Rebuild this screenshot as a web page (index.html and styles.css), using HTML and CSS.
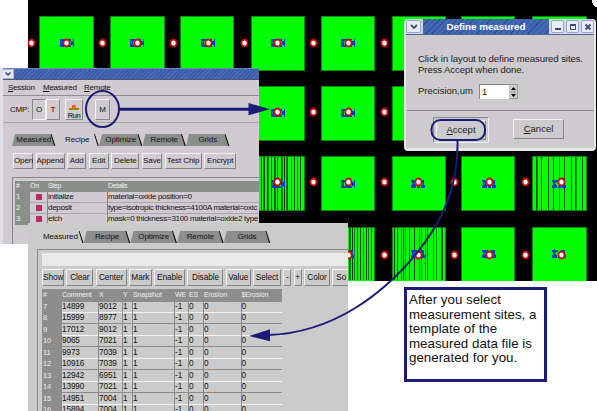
FILE: index.html
```
<!DOCTYPE html>
<html lang="en">
<head>
<meta charset="utf-8">
<title>Define measured</title>
<link rel="stylesheet" href="styles.css">
</head>
<body>
<main class="desktop">
<svg class="layout" width="569" height="281" viewBox="28 0 569 281" shape-rendering="crispEdges">
  <defs>
    <g id="dot" shape-rendering="auto"><ellipse rx="3.1" ry="3.5" fill="#fff" stroke="#c90808" stroke-width="1.8"/></g>
    <g id="mark"><path fill="#003cc8" d="M-7-4h3v8h-3zM-4-4h8v2h-8zM-4 2h8v2h-8zM4-2h2v4h-2zM6-4h1v8h-1z"/><path fill="#168080" d="M-6-2h1v3h-1zM-3-3h2v5h-2zM3 1h1v2h-1z"/></g>
    <g id="mark2"><path fill="#003cc8" d="M-7-3h6v2h-6zM-6-1h3v3h-3zM-7 2h5v3h-5zM-1 3h3v2h-3zM2-3h4v3h-4zM4 0h2v2h-2zM3 2h4v3h-4z"/><path fill="#168080" d="M-5 0h2v1h-2zM4 0h1v2h-1z"/></g>
    <g id="cells1"><path d="M39.500 16h54v54h-54zM110 16h54v54h-54zM180.500 16h53v54h-53zM251 16h53v54h-53zM321.500 16h53v54h-53zM392 16h53v54h-53zM461.500 16h53v54h-53zM532 16h54v54h-54z"/></g>
  </defs>
  <path d="M28 0h569v281H28z"/>
  <g fill="#0f0" stroke="#008a00" stroke-width="1">
    <use href="#cells1"/><use href="#cells1" y="70"/><use href="#cells1" y="140.500"/><use href="#cells1" y="211"/>
  </g>
  <path stroke="#063c06" stroke-width="1" d="M261.500 157v53m3-53v53m3-53v53m4-53v53m3-53v53m3-53v53m4-53v53m3-53v53m3-53v53m4-53v53m3-53v53m3-53v53m3-53v53"/>
  <path stroke="#008c00" stroke-width="1" d="M263.500 157v53m5-53v53m7-53v53m7-53v53m4-53v53m5-53v53m6-53v53"/>
  <path stroke="#063c06" stroke-width="1" d="M349.500 227v53m3-53v53m5-53v53m3-53v53m6-53v53m5-53v53M394.500 227v53m3-53v53m6-53v53m6-53v53m5-53v53m13-53v53m9-53v53m6-53v53"/>
  <path stroke="#008c00" stroke-width="1" d="M350.500 227v53m4-53v53m9-53v53m5-53v53M401.500 227v53m4-53v53m14-53v53m2-53v53m4-53v53m8-53v53m3-53v53m5-53v53"/>
  <path stroke="#064806" stroke-width="1" d="M536.500 157v53m5-53v53m7-53v53m5-53v53m6-53v53m5-53v53m7-53v53m4-53v53m7-53v53"/>
  <path stroke="#009c00" stroke-width="1" d="M537.500 157v53m22-53v53m17-53v53"/>
  <g>
    <use href="#mark" x="67" y="43"/><use href="#mark" x="137" y="43"/><use href="#mark" x="208" y="43"/><use href="#mark" x="278" y="43"/><use href="#mark" x="348" y="43"/>
    <use href="#mark" x="278" y="113"/><use href="#mark" x="348" y="113"/>
    <use href="#mark" x="278" y="184"/><use href="#mark" x="348" y="184"/>
    <use href="#mark2" x="418" y="183"/><use href="#mark2" x="489" y="183"/><use href="#mark2" x="559" y="183"/>
    <use href="#mark2" x="347" y="253"/><use href="#mark2" x="418" y="253"/><use href="#mark2" x="489" y="253"/><use href="#mark2" x="559" y="253"/>
  </g>
  <g id="dots">
    <use href="#dot" x="31.500" y="43"/><use href="#dot" x="66.500" y="43"/><use href="#dot" x="102.500" y="43"/><use href="#dot" x="137.500" y="43"/><use href="#dot" x="173.500" y="43"/><use href="#dot" x="208.500" y="43"/><use href="#dot" x="244.500" y="43"/><use href="#dot" x="277.500" y="43"/><use href="#dot" x="313.500" y="43"/><use href="#dot" x="348.500" y="43"/><use href="#dot" x="384.500" y="43"/>
    <use href="#dot" x="277.500" y="112"/><use href="#dot" x="313.500" y="112"/><use href="#dot" x="348.500" y="112"/><use href="#dot" x="384.500" y="112"/>
    <use href="#dot" x="277.500" y="182"/><use href="#dot" x="313.500" y="182"/><use href="#dot" x="348.500" y="182"/><use href="#dot" x="384.500" y="182"/><use href="#dot" x="418.500" y="182"/><use href="#dot" x="454.500" y="182"/><use href="#dot" x="489.500" y="182"/><use href="#dot" x="525.500" y="182"/><use href="#dot" x="561.500" y="182"/>
    <use href="#dot" x="348.500" y="255"/><use href="#dot" x="384.500" y="255"/><use href="#dot" x="418.500" y="255"/><use href="#dot" x="454.500" y="255"/><use href="#dot" x="489.500" y="255"/><use href="#dot" x="525.500" y="255"/><use href="#dot" x="561.500" y="255"/>
  </g>
  <path fill="#fff" d="M592 0h5v7h-2v-1h-1v-1h-1v-2h-1z"/>
</svg>

<section class="win recipe-win">
  <header class="bar"><span class="winbtn"><svg width="6" height="4"><path d="M.5.500l2.500 2.500L5.500.500" fill="none" stroke="#446" stroke-width="1.500"/></svg></span></header>
  <nav class="menu"><span class="m1"><u>S</u>ession</span><span class="m2"><u>M</u>easured</span><span><u>R</u>emote</span></nav>
  <div class="tools">
    <span class="cmp">CMP:</span><b class="tb on">O</b><b class="tb">T</b>
    <b class="tb run"><svg width="12" height="7"><path d="M4 0h4v3H4z" fill="#f0642c"/><path d="M1 3h10v2H1z" fill="#8c8c00"/><path d="M5 3h2v2H5z" fill="#d08000"/></svg><span>Run</span></b>
    <b class="tb mm">M</b>
  </div>
  <div class="tabs">
    <span class="tab">Measured</span><span class="tab active">Recipe</span><span class="tab">Optimize</span><span class="tab">Remote</span><span class="tab">Grids</span>
  </div>
  <div class="btns">
    <b class="w20">Open</b><b class="w29">Append</b><b class="w19">Add</b><b class="w20">Edit</b><b class="w28">Delete</b><b class="w20">Save</b><b class="w37">Test Chip</b><b class="w32">Encrypt</b>
  </div>
  <div class="steps">
    <div class="srow head"><span>#</span><span>On</span><span>Step</span><span>Details</span></div>
    <div class="srow"><span>1</span><span><i></i></span><span>initialize</span><span>material=oxide position=0</span></div>
    <div class="srow"><span>2</span><span><i></i></span><span>deposit</span><span>type=isotropic thickness=4100A material=oxic</span></div>
    <div class="srow"><span>3</span><span><i></i></span><span>etch</span><span>mask=0 thickness=3100 material=oxide2 type</span></div>
  </div>
</section>

<section class="win data-win">
  <div class="tabs">
    <span class="tab active">Measured</span><span class="tab">Recipe</span><span class="tab">Optimize</span><span class="tab">Remote</span><span class="tab">Grids</span>
  </div>
  <div class="panel">
    <div class="strip"></div>
    <div class="btns">
      <b class="w22">Show</b><b class="w27">Clear</b><b class="w31">Center</b><b class="w23">Mark</b><b class="w31">Enable</b><b class="w36">Disable</b><b class="w25">Value</b><b class="w28">Select</b><b class="w8">-</b><b class="w8">+</b><b class="w26">Color</b><b class="cut">So</b>
    </div>
    <div class="grid">
      <div class="drow head"><span>#</span><span>Comment</span><span>X</span><span>Y</span><span>Snapshot</span><span>WE</span><span>ES</span><span>Erosion</span><span>$Erosion</span></div>
      <div class="drow"><span>7</span><span>14899</span><span>9012</span><span>1</span><span>1</span><span>-1</span><span>0</span><span>0</span><span>0</span></div>
      <div class="drow"><span>8</span><span>15999</span><span>8977</span><span>1</span><span>1</span><span>-1</span><span>0</span><span>0</span><span>0</span></div>
      <div class="drow"><span>9</span><span>17012</span><span>9012</span><span>1</span><span>1</span><span>-1</span><span>0</span><span>0</span><span>0</span></div>
      <div class="drow"><span>10</span><span>9065</span><span>7021</span><span>1</span><span>1</span><span>-1</span><span>0</span><span>0</span><span>0</span></div>
      <div class="drow"><span>11</span><span>9973</span><span>7039</span><span>1</span><span>1</span><span>-1</span><span>0</span><span>0</span><span>0</span></div>
      <div class="drow"><span>12</span><span>10916</span><span>7039</span><span>1</span><span>1</span><span>-1</span><span>0</span><span>0</span><span>0</span></div>
      <div class="drow"><span>13</span><span>12942</span><span>6951</span><span>1</span><span>1</span><span>-1</span><span>0</span><span>0</span><span>0</span></div>
      <div class="drow"><span>14</span><span>13990</span><span>7021</span><span>1</span><span>1</span><span>-1</span><span>0</span><span>0</span><span>0</span></div>
      <div class="drow"><span>15</span><span>14951</span><span>7004</span><span>1</span><span>1</span><span>-1</span><span>0</span><span>0</span><span>0</span></div>
      <div class="drow"><span>16</span><span>15894</span><span>7004</span><span>1</span><span>1</span><span>-1</span><span>0</span><span>0</span><span>0</span></div>
    </div>
  </div>
</section>

<section class="win dialog">
  <header class="dbar">
    <span class="dbtn"><svg width="8" height="6"><path d="M1 1l3 3 3-3" fill="none" stroke="#3c4a78" stroke-width="1.800"/></svg></span>
    <h1>Define measured</h1>
    <span class="dbtn s"><svg width="8" height="8"><path d="M1 5h6v2H1z" fill="#3c4a78"/></svg></span>
    <span class="dbtn s"><svg width="8" height="8"><path d="M1.500 2v4.500h5V2" fill="none" stroke="#3c4a78"/><path d="M1 1h6v2H1z" fill="#3c4a78"/></svg></span>
    <span class="dbtn s"><svg width="8" height="8"><path d="M1.500 1.500l5 5m0-5l-5 5" stroke="#3c4a78" stroke-width="1.800"/></svg></span>
  </header>
  <p class="msg">Click in layout to define measured sites.<br>Press Accept when done.</p>
  <div class="prec"><label>Precision,um</label><span class="field">1</span><span class="spin"><svg width="7" height="12"><path d="M3.500 1L6 4H1zM3.500 11L6 8H1z"/><path d="M0 6h7" stroke="#999"/></svg></span></div>
  <footer class="foot"><span class="default"><b><u>A</u>ccept</b></span><b class="cancel"><u>C</u>ancel</b></footer>
</section>

<aside class="callout">After you select measurement sites, a template of the measured data file is generated for you.</aside>

<svg class="notes" width="597" height="411" viewBox="0 0 597 411">
  <g fill="none" stroke="#1c1c78" stroke-width="2">
    <ellipse cx="102.500" cy="109" rx="16.500" ry="18"/>
    <path d="M118 109.300H250" stroke-width="3"/>
    <rect x="431.500" y="120" width="53.500" height="20" rx="9"/>
    <path d="M457.500 140C458.500 185 444 219 417 253C384 293 334 333 268 335"/>
  </g>
  <path fill="#1c1c78" d="M248.500 103l21.500 6.300-21.500 6zM249 336l21-6.800v12z"/>
</svg>
</main>
</body>
</html>
```
FILE: styles.css
```
* { box-sizing: border-box; }
body { margin: 0; background: #fff; font-family: "Liberation Sans", Arial, sans-serif; font-size: 8px; color: #111; }
b { font-weight: normal; }
.desktop { position: relative; width: 597px; height: 411px; overflow: hidden; }
.layout, .win, .callout, .notes { position: absolute; }
.layout { left: 28px; top: 0; }
.notes { left: 0; top: 0; }
.win { overflow: hidden; white-space: nowrap; }

.recipe-win { left: 0; top: 68px; width: 259px; height: 176px; background: #d0cbd0; border-left: 3px solid #dfdfe8; }
.bar { height: 12px; background: repeating-linear-gradient(135deg, #4a6eb8 0 1px, #3c5ea8 1px 3px); border-bottom: 1px solid #556; border-top: 1px solid #7088c0; }
.winbtn { display: flex; width: 12px; height: 10px; margin-left: -1px; align-items: center; justify-content: center; background: #e4e8f4; border: 1px solid #aab4d0; }
.menu { display: flex; height: 16px; padding: 1px 0 0 5px; line-height: 13px; border-bottom: 1px solid #908c90; letter-spacing: -.25px; }
.m1 { width: 35px; }
.m2 { width: 41px; }
.tools { display: flex; height: 27px; padding: 3px 0 0 7px; border-bottom: 1px solid #a8a4a8; }
.cmp { width: 22px; line-height: 21px; letter-spacing: -.2px; }
.tb { width: 14px; height: 21px; line-height: 19px; text-align: center; border: 1px solid; border-color: #f4f4f4 #888 #888 #f4f4f4; }
.tb.on { border-color: #888 #f4f4f4 #f4f4f4 #888; }
.run { display: flex; flex-direction: column; align-items: center; width: 18px; margin-left: 5px; padding-top: 5px; line-height: 8px; font-size: 7.500px; letter-spacing: -.4px; color: #000; }
.run svg { flex: none; }
.mm { width: 15px; margin-left: 12px; }
.tabs { display: flex; }
.tab { position: relative; height: 12px; line-height: 12px; text-align: center; background: #8b8f8b; clip-path: polygon(3px 0, calc(100% - 4px) 0, 100% 100%, 0 100%); letter-spacing: -.1px; }
.tab::after { content: ""; position: absolute; right: 0; top: 0; width: 5px; height: 12px; background: #111; clip-path: polygon(0 0, 1.2px 0, 100% 100%, 3.600px 100%); }
.recipe-win .tabs { margin: 11px 0 0 9px; }
.recipe-win .tab { width: 43.500px; }
.recipe-win .tab.active { background: #d0cbd0; }
.btns { display: flex; }
.btns b { flex: none; line-height: 14px; text-align: center; border: 1px solid; border-color: #f4f4f4 #858585 #858585 #f4f4f4; letter-spacing: -.1px; }
.recipe-win .btns { height: 16px; gap: 2.600px; margin: 7px 0 0 10px; }
.w8 { width: 8px; } .w19 { width: 19px; } .w20 { width: 20px; } .w22 { width: 22px; } .w23 { width: 23px; } .w25 { width: 25px; } .w26 { width: 26px; } .w27 { width: 27px; } .w28 { width: 28px; } .w29 { width: 29px; } .w31 { width: 31px; } .w32 { width: 32px; } .w36 { width: 36px; } .w37 { width: 37px; }
.btns .cut { flex: 1; text-align: left; padding-left: 3px; border-right: 0; }
.steps { margin: 8px 0 0 9px; padding: 3px 0 0 2px; border: solid #898589; border-width: 1px 0 0 1px; height: 70px; }
.srow { display: grid; grid-template-columns: 14px 18px 60px 1fr; height: 11px; line-height: 10px; letter-spacing: -.3px; }
.srow span { border-left: 1px solid #858585; border-bottom: 1px solid #aaa6aa; }
.srow span:first-child, .srow.head span { background: #8b8f8b; color: #f0f0f0; border-color: #8b8f8b; }
.srow.head span { font-size: 7px; }
.srow i { display: block; width: 6px; height: 6px; margin: 2px 0 0 6px; background: #b62c60; }

.data-win { left: 28px; top: 223px; width: 320px; height: 188px; background: #cbcbcb; }
.data-win .tabs { padding: 8px 0 0 9px; }
.data-win .tab { width: 46.700px; background: #8d8d8d; }
.data-win .tab.active { background: #cbcbcb; }
.panel { margin: 6px 0 0 9px; padding: 3px 0 0 4px; border: solid #8a8a8a; border-width: 1px 0 0 1px; height: 170px; }
.strip { height: 13px; background: #e9e9e9; }
.data-win .btns { height: 17px; gap: 2.300px; margin-top: 3px; }
.data-win .btns b { line-height: 15px; font-size: 8.300px; }
.grid { width: 240px; margin-top: 3px; }
.drow { display: grid; grid-template-columns: 19px 37px 24px 10px 42px 14px 15px 37.500px 41.500px; height: 11.550px; line-height: 11px; font-size: 8.200px; letter-spacing: -.1px; }
.drow span { border-left: 1px solid #8a8a8a; border-bottom: 1px solid #8a8a8a; white-space: nowrap; }
.drow:nth-child(even) span { border-bottom-color: #f4f4f4; }
.drow span:first-child, .drow.head span { background: #8d8d8d; color: #f0f0f0; border-color: #8d8d8d; font-size: 7.500px; }
.drow.head span { font-size: 7px; line-height: 12px; }

.dialog { left: 404px; top: 19px; width: 192px; height: 132px; background: #cdcbcd; border: solid #e8e8e8; border-width: 0 2px 3px; border-radius: 4px; color: #222; }
.dbar { display: flex; align-items: center; height: 16px; gap: 2px; background: #cdd6ea; border-bottom: 1px solid #59678c; }
.dbtn { display: flex; flex: none; width: 15px; height: 13px; align-items: center; justify-content: center; background: #e8ecf6; border: 1px solid #98a6c8; border-radius: 2px; }
.dbtn.s { width: 13px; }
.dbar h1 { width: 126px; height: 15px; margin: 0; line-height: 16px; text-align: center; font-size: 9.800px; color: #fff; background: repeating-linear-gradient(135deg, #2f5298 0 1px, #4468b4 1px 4px); }
.msg { margin: 19px 0 0 12px; font-size: 9.600px; line-height: 10.500px; letter-spacing: -.1px; }
.prec { display: flex; height: 15px; margin: 9px 0 0 12px; font-size: 9.500px; line-height: 14px; }
.prec label { width: 61px; }
.field { width: 30px; padding-left: 2px; background: #fff; border: solid #888; border-width: 1px 0 0 1px; }
.spin { display: flex; width: 9px; padding: 1px; border: solid #999; border-width: 1px 1px 1px 0; }
.foot { display: flex; align-items: flex-start; height: 37px; margin: 11px 0 0 1px; padding: 6px 0 0 26px; border-top: 1px solid #888; font-size: 9.500px; }
.default { width: 56px; height: 26px; padding: 2px; border: 1px solid; border-color: #888 #eee #eee #888; }
.default b, .cancel { display: block; height: 20px; line-height: 18px; text-align: center; border: 1px solid; border-color: #f4f4f4 #888 #888 #f4f4f4; }
.cancel { width: 51px; margin: 2px 0 0 24px; }
.callout { left: 404px; top: 287px; width: 143px; height: 95px; padding: 3px 0 0 2px; border: 3px solid #1c1c78; background: #fff; font-size: 13.330px; line-height: 14.600px; color: #111; }
```
